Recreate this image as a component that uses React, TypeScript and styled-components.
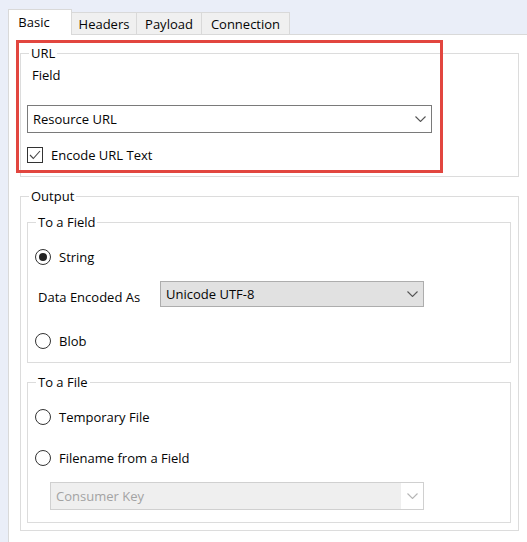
import React from "react";
import styled, { createGlobalStyle } from "styled-components";

const GlobalStyle = createGlobalStyle`
  html, body {
    margin: 0;
    padding: 0;
  }
  body {
    background: #eaeef8;
    font-family: "Open Sans", "Segoe UI", sans-serif;
    font-size: 13px;
    color: #050505;
  }
  * {
    box-sizing: border-box;
  }
`;

const Window = styled.div`
  height: 542px;
  display: flex;
  flex-direction: column;
  padding-left: 8px;
  overflow: hidden;
`;

const TabStrip = styled.div`
  display: flex;
  align-items: flex-end;
  height: 34px;
  position: relative;
  z-index: 1;
`;

const Tab = styled.div<{ $active?: boolean; $width: number }>`
  width: ${(p) => p.$width}px;
  height: ${(p) => (p.$active ? 26 : 22)}px;
  margin-bottom: ${(p) => (p.$active ? -1 : 0)}px;
  margin-left: ${(p) => (p.$active ? 0 : -1)}px;
  padding-right: ${(p) => (p.$active ? 12 : 0)}px;
  padding-bottom: ${(p) => (p.$active ? 2 : 0)}px;
  display: flex;
  align-items: center;
  justify-content: center;
  background: ${(p) => (p.$active ? "#ffffff" : "#f0f0f0")};
  border: 1px solid #d9d9d9;
  border-bottom: none;
  position: relative;
  z-index: ${(p) => (p.$active ? 2 : 1)};
  &:first-child {
    margin-left: 0;
  }
`;

const Panel = styled.div`
  flex: 1;
  background: #ffffff;
  border-top: 1px solid #d9d9d9;
  border-left: 1px solid #d9d9d9;
  padding: 10px 8px 0 11px;
  display: flex;
  flex-direction: column;
`;

const Highlighted = styled.div`
  position: relative;
`;

// red frame drawn over the URL group
const Highlight = styled.div`
  position: absolute;
  top: -5px;
  left: -4px;
  width: 427px;
  height: 133px;
  border: 3px solid #e2463f;
  pointer-events: none;
`;

const Group = styled.fieldset<{ $gap?: number; $pr?: number; $pb?: number }>`
  margin: ${(p) => p.$gap ?? 0}px 0 0 0;
  min-width: 0;
  border: 1px solid #dcdcdc;
  padding: 0 ${(p) => p.$pr ?? 6}px ${(p) => p.$pb ?? 13}px 6px;
  display: flex;
  flex-direction: column;
`;

const Caption = styled.legend`
  margin-left: 2px;
  padding: 0 2px;
  line-height: 16px;
  font-size: 13px;
`;

const Label = styled.div<{ $gap: number }>`
  margin-top: ${(p) => p.$gap}px;
  padding-left: 5px;
  line-height: 16px;
`;

const Choice = styled.div<{ $gap: number }>`
  margin-top: ${(p) => p.$gap}px;
  height: 16px;
  display: flex;
  align-items: center;
  gap: 8px;
  line-height: 16px;
`;

const Box = styled.span`
  width: 16px;
  height: 16px;
  border: 1px solid #333333;
  background: #ffffff;
  display: flex;
  align-items: center;
  justify-content: center;
`;

const RadioRing = styled.span`
  width: 16px;
  height: 16px;
  margin-left: 1px;
  border: 1px solid #333333;
  border-radius: 50%;
  background: #ffffff;
  display: flex;
  align-items: center;
  justify-content: center;
`;

const RadioDot = styled.span`
  width: 8px;
  height: 8px;
  border-radius: 50%;
  background: #222222;
`;

type Variant = "normal" | "filled" | "disabled";

const SelectBox = styled.div<{ $variant: Variant; $width: number; $height: number; $gap?: number; $indent?: number }>`
  width: ${(p) => p.$width}px;
  height: ${(p) => p.$height}px;
  margin-top: ${(p) => p.$gap ?? 0}px;
  margin-left: ${(p) => p.$indent ?? 0}px;
  display: flex;
  align-items: stretch;
  border: 1px solid
    ${(p) => (p.$variant === "normal" ? "#7a7a7a" : p.$variant === "filled" ? "#adadad" : "#d0d0d0")};
  background: ${(p) => (p.$variant === "normal" ? "#ffffff" : p.$variant === "filled" ? "#e1e1e1" : "#efefef")};
  color: ${(p) => (p.$variant === "disabled" ? "#a3a3a3" : "#050505")};
`;

const SelectText = styled.span`
  flex: 1;
  display: flex;
  align-items: center;
  padding-left: 5px;
`;

const ChevronBox = styled.span<{ $blank?: boolean }>`
  width: 22px;
  display: flex;
  align-items: center;
  justify-content: center;
  background: ${(p) => (p.$blank ? "#ffffff" : "transparent")};
`;

const DataRow = styled.div`
  margin-top: 16px;
  display: grid;
  grid-template-columns: 126px 264px;
  align-items: center;
`;

const DataLabel = styled.span`
  padding-left: 4px;
  padding-top: 6px;
`;

const Chevron = ({ color }: { color: string }) => (
  <svg width="11" height="6" viewBox="0 0 11 6">
    <path d="M0.5 0.5 L5.5 5.5 L10.5 0.5" fill="none" stroke={color} strokeWidth="1.1" />
  </svg>
);

const Select = ({
  value,
  variant,
  width,
  height,
  gap,
  indent,
}: {
  value: string;
  variant: Variant;
  width: number;
  height: number;
  gap?: number;
  indent?: number;
}) => (
  <SelectBox $variant={variant} $width={width} $height={height} $gap={gap} $indent={indent}>
    <SelectText>{value}</SelectText>
    <ChevronBox $blank={variant === "disabled"}>
      <Chevron color={variant === "disabled" ? "#b5b5b5" : "#555555"} />
    </ChevronBox>
  </SelectBox>
);

const Radio = ({ label, checked, gap }: { label: string; checked?: boolean; gap: number }) => (
  <Choice $gap={gap}>
    <RadioRing>{checked && <RadioDot />}</RadioRing>
    <span>{label}</span>
  </Choice>
);

const tabs = [
  { name: "Basic", width: 64 },
  { name: "Headers", width: 66 },
  { name: "Payload", width: 66 },
  { name: "Connection", width: 89 },
];

export default function App() {
  return (
    <Window>
      <GlobalStyle />
      <TabStrip>
        {tabs.map((t, i) => (
          <Tab key={t.name} $active={i === 0} $width={t.width}>
            {t.name}
          </Tab>
        ))}
      </TabStrip>
      <Panel>
        <Highlighted>
          <Group>
            <Caption>URL</Caption>
            <Label $gap={6}>Field</Label>
            <Select value="Resource URL" variant="normal" width={405} height={28} gap={22} />
            <Choice $gap={14}>
              <Box>
                <svg width="12" height="10" viewBox="0 0 12 10">
                  <path d="M1 5 L4.3 8.5 L11 1" fill="none" stroke="#444444" strokeWidth="1.1" />
                </svg>
              </Box>
              <span>Encode URL Text</span>
            </Choice>
          </Group>
          <Highlight />
        </Highlighted>

        <Group $gap={11} $pr={7} $pb={7}>
          <Caption>Output</Caption>
          <Group $gap={10}>
            <Caption>To a Field</Caption>
            <Radio label="String" checked gap={19} />
            <DataRow>
              <DataLabel>Data Encoded As</DataLabel>
              <Select value="Unicode UTF-8" variant="filled" width={264} height={26} />
            </DataRow>
            <Radio label="Blob" gap={26} />
          </Group>
          <Group $gap={11} $pb={12}>
            <Caption>To a File</Caption>
            <Radio label="Temporary File" gap={19} />
            <Radio label="Filename from a Field" gap={25} />
            <Select value="Consumer Key" variant="disabled" width={374} height={28} gap={16} indent={16} />
          </Group>
        </Group>
      </Panel>
    </Window>
  );
}
